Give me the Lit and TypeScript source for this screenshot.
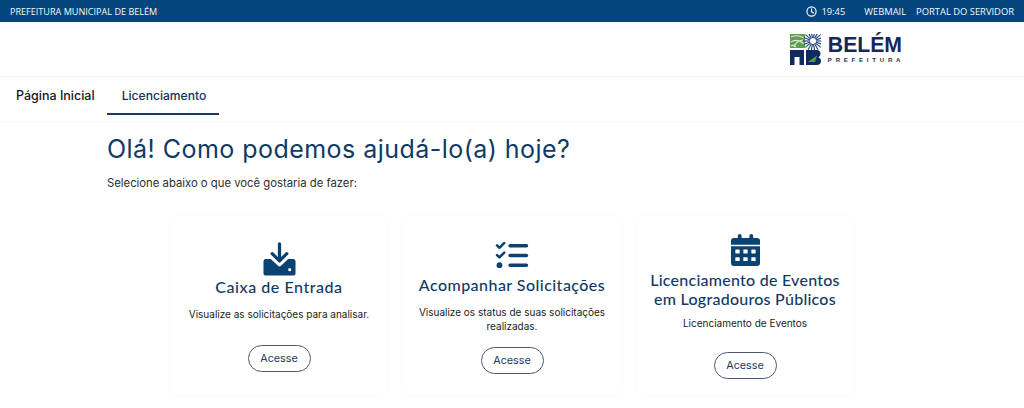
import { LitElement, html, css, svg } from "lit";
import { customElement } from "lit/decorators.js";

const rays = Array.from({ length: 18 }, (_, i) => {
  const a = (i / 18) * Math.PI * 2;
  const c = Math.cos(a), s = Math.sin(a);
  return svg`<line x1=${23 + c * 3} y1=${7 + s * 3} x2=${23 + c * 10} y2=${7 + s * 10}/>`;
});

const downloadIcon = html`<svg class="icon" width="33" height="34" viewBox="0 0 34 34"><path d="M17 1.500v16" stroke="#0a4273" stroke-width="3.400" stroke-linecap="round" fill="none"/><path d="M9.500 11.500 17 19l7.500-7.500" stroke="#0a4273" stroke-width="3.400" stroke-linecap="round" stroke-linejoin="round" fill="none"/><path d="M3 17h5l7.500 7a2.200 2.200 0 0 0 3 0L26 17h5a2.500 2.500 0 0 1 2.500 2.500V32a2 2 0 0 1-2 2h-29a2 2 0 0 1-2-2V19.500A2.500 2.500 0 0 1 3 17Z" fill="#0a4273"/><circle cx="27.500" cy="28" r="1.600" fill="#fff"/></svg>`;

const listIcon = html`<svg class="icon" width="34" height="27" viewBox="0 0 34 28"><g fill="none" stroke="#0a4273" stroke-linecap="round" stroke-linejoin="round"><path d="M1.500 3.500 4 6l5-5M1.500 13.500 4 16l5-5" stroke-width="2.600"/><path d="M15 4h17M15 14h17M15 24h17" stroke-width="3.600"/></g><circle cx="4" cy="24" r="3" fill="#0a4273"/></svg>`;

const calendarIcon = html`<svg class="icon" width="29" height="32" viewBox="0 0 30 33"><path d="M7 2a2 2 0 0 1 4 0v2h8V2a2 2 0 0 1 4 0v2h4a3 3 0 0 1 3 3v4H0V7a3 3 0 0 1 3-3h4Z" fill="#0a4273"/><path d="M0 12.500h30V30a3 3 0 0 1-3 3H3a3 3 0 0 1-3-3Z" fill="#0a4273"/><g fill="#fff"><rect x="4.500" y="16" width="4.500" height="4" rx=".5"/><rect x="12.750" y="16" width="4.500" height="4" rx=".5"/><rect x="21" y="16" width="4.500" height="4" rx=".5"/><rect x="4.500" y="24" width="4.500" height="4" rx=".5"/><rect x="12.750" y="24" width="4.500" height="4" rx=".5"/><rect x="21" y="24" width="4.500" height="4" rx=".5"/></g></svg>`;

@customElement("app-root")
export class AppRoot extends LitElement {
  static styles = css`
    :host { display: block; width: 1024px; height: 408px; overflow: hidden; background: #fff; font-family: "Inter", "Liberation Sans", sans-serif; color: #1b2233; }
    .topbar { height: 22px; background: #03457c; color: #f5f8fb; display: flex; align-items: center; padding: 0 10px; font-size: 9.400px; font-family: "Open Sans", sans-serif; }
    .topbar .brand { flex: 1; font-size: 9.080px; }
    .topbar .links { display: flex; align-items: center; }
    .clock { display: flex; align-items: center; gap: 4px; margin-right: 19px; }
    .webmail { margin-right: 10px; }
    .header { height: 54px; border-bottom: 1px solid #f1f2f3; display: flex; justify-content: flex-end; align-items: center; padding-right: 122px; }
    .logo { display: flex; align-items: center; gap: 7px; margin-top: 1px; }
    .mark { display: block; }
    .logotext { display: flex; flex-direction: column; color: #14285c; }
    .belem { font: 700 21.200px/22px "Liberation Sans", sans-serif; height: 22px; }
    .pref { font: 700 6px/9px "Liberation Sans", sans-serif; letter-spacing: 3.800px; color: #26304f; white-space: nowrap; width: 72px; }
    nav { height: 44px; border-bottom: 1px solid #f3f4f5; display: flex; padding-left: 16px; font: 500 12.500px "Inter", sans-serif; }
    .tab { display: flex; align-items: center; height: 37px; }
    .tab.first { color: #15171c; width: 91px; }
    .tab.active { color: #14305c; border-bottom: 2px solid #1b3a60; width: 112px; justify-content: center; font-size: 12.100px; padding-left: 2px; box-sizing: border-box; height: 38px; }
    main { padding-left: 107px; }
    h1 { margin: 0; padding-top: 11px; font: 400 25px/33px "Inter", sans-serif; letter-spacing: 0.460px; color: #0f3a66; }
    .sub { margin: 10px 0 0; font: 400 11.300px/15px "Inter", sans-serif; color: #2a2e33; }
    .cards { display: flex; gap: 18px; margin: 24px 0 0 64px; align-items: flex-start; }
    .card { box-sizing: border-box; width: 216px; height: 180px; border-radius: 10px; box-shadow: 0 0 8px rgba(20, 40, 80, 0.025); display: flex; flex-direction: column; align-items: center; text-align: center; flex: none; }
    .card h2 { margin: 0; font: 500 16px/19px "Lato", sans-serif; letter-spacing: 0.550px; color: #123a66; white-space: nowrap; }
    .card p { margin: 0; font: 400 10px/14px "Inter", sans-serif; color: #1a1c20; }
    .btn { box-sizing: border-box; width: 63px; height: 27px; border: 1px solid #4a5a72; border-radius: 14px; display: flex; align-items: center; justify-content: center; font: 400 10.800px "Inter", sans-serif; color: #233a5e; }
    .c1 .icon { margin-top: 27px; } .c1 h2 { margin-top: 1px; } .c1 p { margin-top: 11px; } .c1 .btn { margin-top: 24px; }
    .c2 { margin-left: -1px; }
    .c2 .icon { margin-top: 27px; } .c2 h2 { margin-top: 6px; letter-spacing: 0.460px; } .c2 p { margin-top: 11px; width: 200px; } .c2 .btn { margin-top: 14px; }
    .c3 { margin-left: -1px; }
    .c3 .icon { margin-top: 19px; } .c3 h2 { margin-top: 4px; letter-spacing: 0.250px; } .c3 p { margin-top: 8px; } .c3 .btn { margin-top: 22px; }
  `;

  render() {
    return html`
      <div class="topbar">
        <span class="brand">PREFEITURA MUNICIPAL DE BELÉM</span>
        <div class="links">
          <span class="clock"><svg width="11" height="11" viewBox="0 0 12 12" fill="none" stroke="#f5f8fb" stroke-width="1.300"><circle cx="6" cy="6" r="5"/><path d="M6 3v3.300l2 1.200" stroke-linecap="round"/></svg>19:45</span>
          <span class="webmail">WEBMAIL</span>
          <span>PORTAL DO SERVIDOR</span>
        </div>
      </div>
      <div class="header">
        <div class="logo">
          <svg class="mark" width="31" height="31" viewBox="0 0 31 31">
            <rect x="0" y="0" width="15" height="14" fill="#5f9f52"/>
            <path d="M1 3q6-3 13 1M1 8q6-4 13 2M4 13q2-6 9-7M1 12q3-2 5 1" stroke="#dcebd2" stroke-width="1.100" fill="none"/>
            <g stroke="#1f3c78" stroke-width="1.100">${rays}</g>
            <circle cx="23" cy="7" r="2.500" fill="#fff"/>
            <path d="M0 31V16h14v15H9.500v-8h-5v8Z" fill="#0f2a5c"/>
            <path d="M16 16h10.500q4 0 4 3.500 0 3-2 3.800 2.500 1 2.500 3.700 0 4-4.500 4H16Z" fill="#0f2a5c"/>
            <path d="M18 28l9-6.500-2 6.500Z" fill="#4f9e48"/>
          </svg>
          <div class="logotext"><span class="belem">BELÉM</span><span class="pref">PREFEITURA</span></div>
        </div>
      </div>
      <nav>
        <div class="tab first">Página Inicial</div>
        <div class="tab active">Licenciamento</div>
      </nav>
      <main>
        <h1>Olá! Como podemos ajudá-lo(a) hoje?</h1>
        <p class="sub">Selecione abaixo o que você gostaria de fazer:</p>
        <div class="cards">
          <div class="card c1">${downloadIcon}<h2>Caixa de Entrada</h2><p>Visualize as solicitações para analisar.</p><div class="btn">Acesse</div></div>
          <div class="card c2">${listIcon}<h2>Acompanhar Solicitações</h2><p>Visualize os status de suas solicitações realizadas.</p><div class="btn">Acesse</div></div>
          <div class="card c3">${calendarIcon}<h2>Licenciamento de Eventos<br />em Logradouros Públicos</h2><p>Licenciamento de Eventos</p><div class="btn">Acesse</div></div>
        </div>
      </main>
    `;
  }
}
